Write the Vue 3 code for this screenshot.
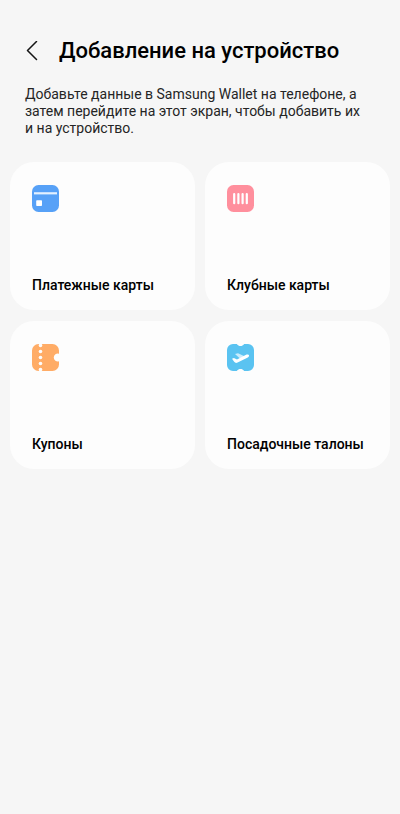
<script setup>
const categories = [
  { id: 'payment', label: 'Платежные карты' },
  { id: 'club', label: 'Клубные карты' },
  { id: 'coupons', label: 'Купоны' },
  { id: 'boarding', label: 'Посадочные талоны' },
]
</script>

<template>
  <main class="screen">
    <header class="header">
      <button class="back" type="button" aria-label="Назад">
        <svg viewBox="0 0 12 20" width="12" height="20" fill="none" stroke="#151515" stroke-width="1.5" stroke-linecap="round" stroke-linejoin="round">
          <path d="M10.5 .5 1.5 9.500l9 9" />
        </svg>
      </button>
      <h1 class="title">Добавление на устройство</h1>
    </header>
    <p class="intro">Добавьте данные в Samsung Wallet на телефоне, а затем перейдите на этот экран, чтобы добавить их и на устройство.</p>
    <section class="grid">
      <button v-for="item in categories" :key="item.id" class="card" type="button">
        <svg class="icon" viewBox="0 0 27 27" width="27" height="27" aria-hidden="true">
          <template v-if="item.id === 'payment'">
            <rect width="27" height="27" rx="6.5" fill="#57a1f7" />
            <path d="M2 7.2h23v2.2H2z" fill="#e4f1ff" />
            <rect x="4.2" y="15.2" width="5.800" height="5.800" rx="0.8" fill="#fff" />
          </template>
          <template v-else-if="item.id === 'club'">
            <rect width="27" height="27" rx="6.5" fill="#ff8f9d" />
            <path d="M7.2 9v9.2M11.4 9v9.2M15.6 9v9.2M19.8 9v9.2" stroke="#fff" stroke-width="2.200" stroke-linecap="round" />
          </template>
          <template v-else-if="item.id === 'coupons'">
            <path d="M6.5 0h14A6.5 6.5 0 0 1 27 6.5v3.200a4 4 0 1 0 0 7.600v3.200a6.5 6.5 0 0 1-6.5 6.5h-14A6.5 6.5 0 0 1 0 20.5v-14A6.5 6.5 0 0 1 6.5 0z" fill="#ffac66" />
            <g fill="#fcfcfc">
              <circle cx="8.5" cy="1.5" r="1.800" />
              <circle cx="8.5" cy="7.5" r="1.800" />
              <circle cx="8.5" cy="13.5" r="1.800" />
              <circle cx="8.5" cy="19.5" r="1.800" />
              <circle cx="8.5" cy="25.5" r="1.800" />
            </g>
          </template>
          <template v-else>
            <path d="M6 0h3.4c1 0 1.3 2 4.1 2s3.1-2 4.1-2H21a6 6 0 0 1 6 6v15a6 6 0 0 1-6 6h-3.4c-1 0-1.3-2-4.1-2s-3.1 2-4.1 2H6a6 6 0 0 1-6-6V6a6 6 0 0 1 6-6z" fill="#5ac3f1" />
            <path d="M8 10l3-.8 7 3.2-4.5 2.6z" fill="#c9ecfc" />
            <path d="M5 14.8l1.900-.8 3.100 1.500 8.600-4.600c1.600-.8 3.200-.5 3.400.4.2 1-.5 1.900-1.700 2.500L10.600 18.500c-1.300.6-2.400.5-3.200-.4z" fill="#fff" />
          </template>
        </svg>
        <span class="label">{{ item.label }}</span>
      </button>
    </section>
  </main>
</template>

<style>
body {
  background: #f6f6f6;
}
</style>

<style scoped>
.screen {
  box-sizing: border-box;
  padding: 37px 10px 24px;
  font-family: Roboto, "Noto Sans", sans-serif;
  color: #000;
}

.header {
  display: flex;
  align-items: center;
  gap: 17px;
  padding: 0 12px;
}

.back {
  display: flex;
  justify-content: center;
  padding: 4px;
  border: 0;
  background: none;
  cursor: pointer;
}

.title {
  margin: 0;
  font-size: 22px;
  font-weight: 500;
  line-height: 28px;
}

.intro {
  margin: 21px 0 0;
  padding: 0 24px 0 15px;
  font-size: 14px;
  line-height: 17px;
  color: #252525;
}

.grid {
  display: grid;
  grid-template-columns: 1fr 1fr;
  gap: 11px 10px;
  margin-top: 25px;
}

.card {
  display: flex;
  flex-direction: column;
  justify-content: space-between;
  align-items: flex-start;
  min-width: 0;
  min-height: 148px;
  padding: 23px 10px 16px 22px;
  border: 0;
  border-radius: 24px;
  background: #fdfdfd;
  font-family: inherit;
  color: inherit;
  text-align: left;
  cursor: pointer;
}

.icon {
  display: block;
}

.label {
  font-size: 14px;
  font-weight: 500;
  line-height: 18px;
}
</style>
